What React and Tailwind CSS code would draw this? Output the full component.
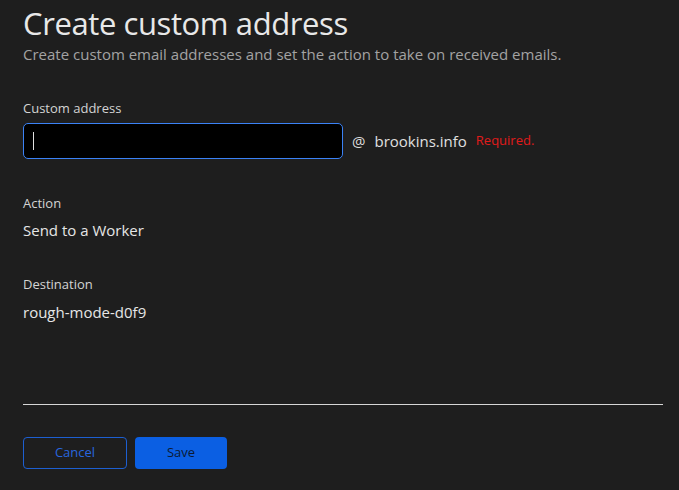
import React from 'react';

const App = () => {
  return (
    <div className="min-h-[490px] w-full bg-[#1e1e1e] pl-[23px] pr-[16px] text-[#e6e6e6]" style={{ fontFamily: '"Open Sans", "Noto Sans", sans-serif' }}>
      <h1 className="pt-[2px] text-[31px] leading-[42px] font-normal tracking-[-0.4px] text-[#e8e8e8]">Create custom address</h1>
      <p className="text-[15px] leading-[20px] text-[#a3a3a3]">Create custom email addresses and set the action to take on received emails.</p>

      <div className="mt-[35px]">
        <label className="block text-[13px] leading-[18px] text-[#d4d4d4]">Custom address</label>
        <div className="mt-[6px] flex items-center">
          <div className="flex h-[36px] w-[320px] items-center rounded-[5px] border-[1.5px] border-[#3b82f6] bg-black pl-[9px]">
            <span className="h-[18px] w-px bg-[#e0e0e0]" />
          </div>
          <span className="ml-[9px] text-[15px] text-[#dcdcdc]">@</span>
          <span className="ml-[9px] text-[15px] text-[#e0e0e0]">brookins.info</span>
          <span className="ml-[9px] text-[13px] text-[#e01b1b]">Required.</span>
        </div>
      </div>

      <div className="mt-[35px]">
        <div className="text-[13px] leading-[18px] text-[#d4d4d4]">Action</div>
        <div className="mt-[8px] text-[15px] leading-[20px] text-[#e6e6e6]">Send to a Worker</div>
      </div>

      <div className="mt-[35px]">
        <div className="text-[13px] leading-[18px] text-[#d4d4d4]">Destination</div>
        <div className="mt-[9px] text-[15px] leading-[20px] text-[#e6e6e6]">rough-mode-d0f9</div>
      </div>

      <div className="mt-[82px] h-px w-full bg-[#d6d6d6]" />

      <div className="mt-[32px] flex gap-[8px]">
        <button className="h-[32px] w-[104px] rounded-[4px] border border-[#1d5fd1] text-[13px] text-[#2866de]">Cancel</button>
        <button className="h-[32px] w-[92px] rounded-[4px] bg-[#0b5fe3] text-[13px] text-[#0c1a33]">Save</button>
      </div>
    </div>
  );
};

export default App;
